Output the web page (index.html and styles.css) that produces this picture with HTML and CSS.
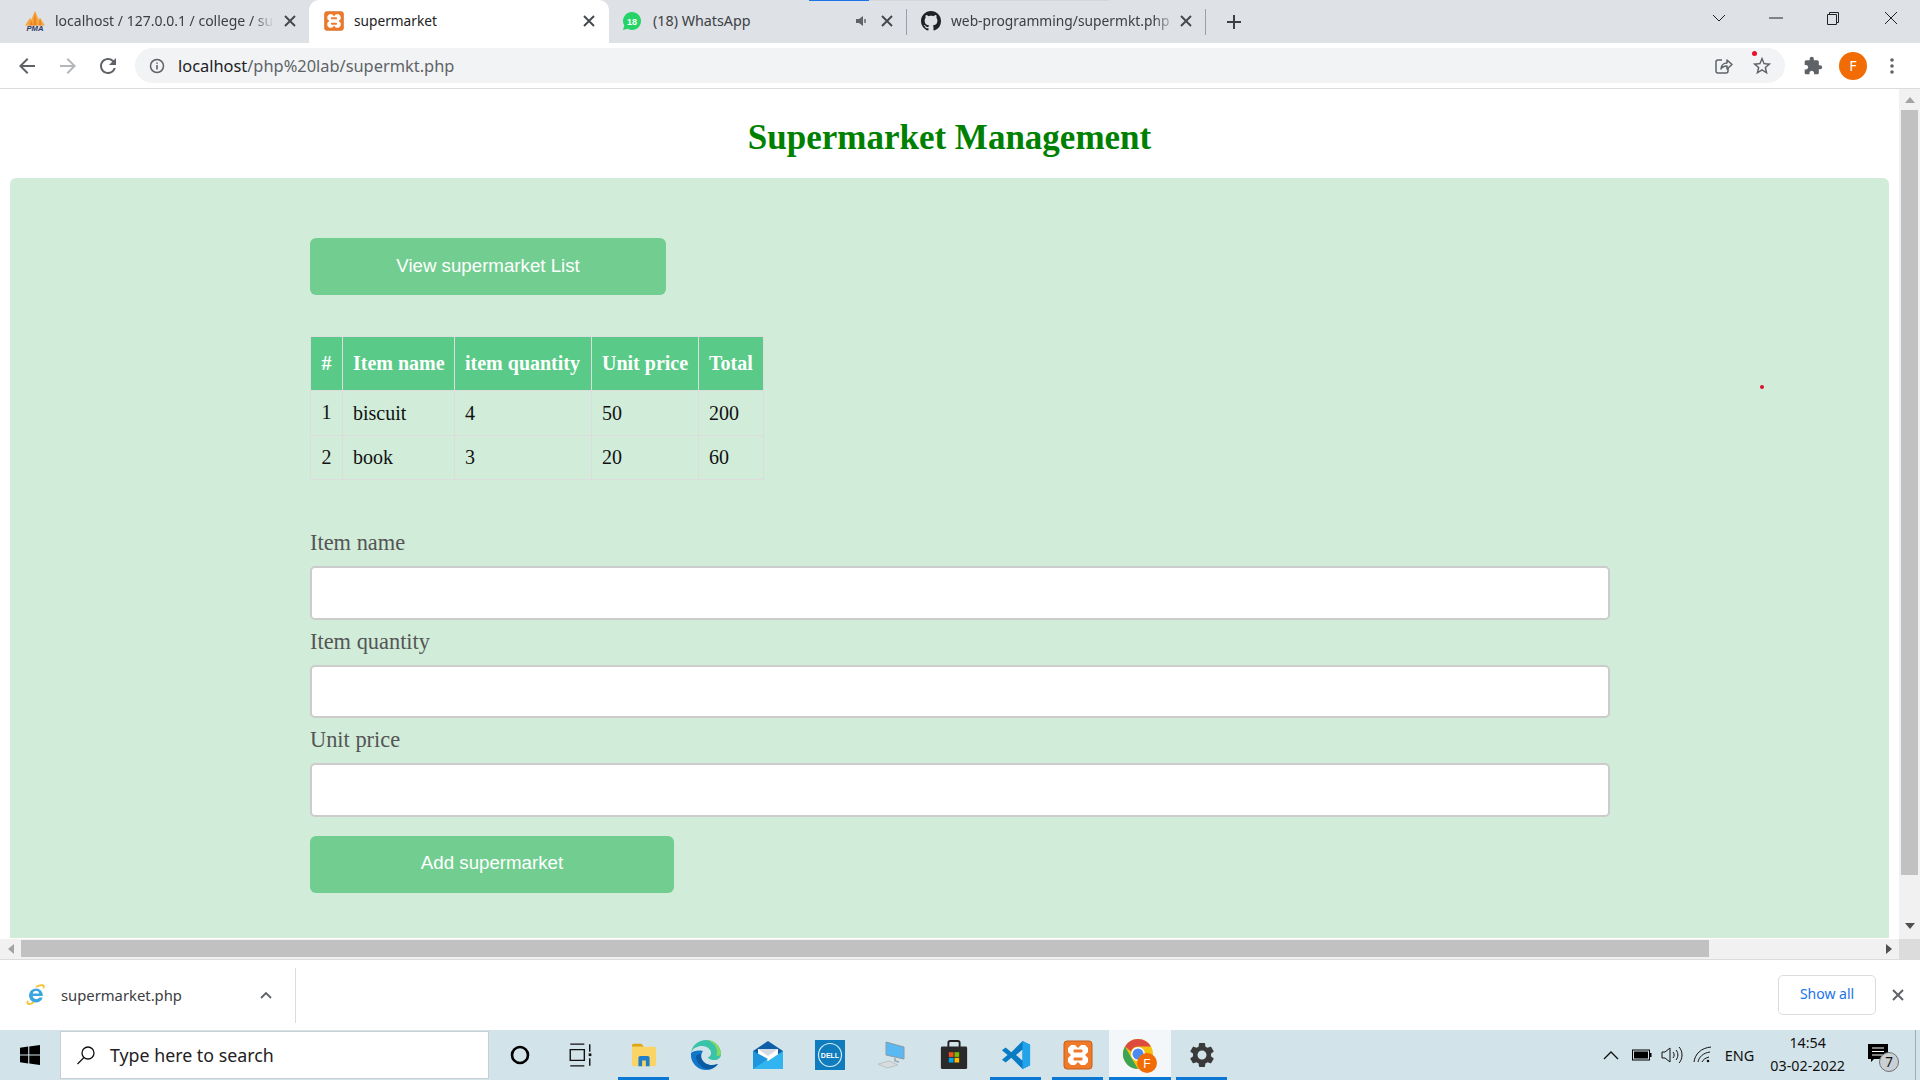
FILE: index.html
```html
<!DOCTYPE html>
<html lang="en">
<head>
<meta charset="utf-8">
<title>supermarket</title>
<link rel="stylesheet" href="styles.css">
</head>
<body>
<div class="app">
  <header class="tabstrip">
    <div class="tab tab-a">
      <svg class="fav" viewBox="0 0 20 20"><path d="M1 14 5.500 7l1 2L10 1l3.500 8 1-2 4.500 7z" fill="#f7a63e"/><path d="M6.500 9 8 14H5zM10 1l1.500 13h-3zM14.500 7 16 14h-2.500z" fill="#e8781e" opacity=".75"/><text x="10" y="19.500" text-anchor="middle" class="pma">PMA</text></svg>
      <span class="tab-title">localhost / 127.0.0.1 / college / su</span>
      <svg class="tab-x" viewBox="0 0 20 20"><path d="M5 5l10 10M15 5 5 15"/></svg>
    </div>
    <div class="tab tab-b">
      <svg class="fav" viewBox="0 0 20 20"><use href="#xampp"/></svg>
      <span class="tab-title">supermarket</span>
      <svg class="tab-x" viewBox="0 0 20 20"><path d="M5 5l10 10M15 5 5 15"/></svg>
    </div>
    <div class="tab tab-c">
      <svg class="fav" viewBox="0 0 20 20"><path d="M10 1a9 9 0 0 0-7.700 13.600L1 19l4.500-1.200A9 9 0 1 0 10 1z" fill="#25d366"/><text x="10" y="13.500" text-anchor="middle" class="wa">18</text></svg>
      <span class="tab-title">(18) WhatsApp</span>
      <svg class="tab-mute" viewBox="0 0 14 14"><path d="M1 5h3l4-3v10L4 9H1z" fill="#5f6368"/><path d="M10 5v4" stroke="#5f6368" stroke-width="1.400"/></svg>
      <svg class="tab-x" viewBox="0 0 20 20"><path d="M5 5l10 10M15 5 5 15"/></svg>
    </div>
    <div class="tab tab-d">
      <svg class="fav" viewBox="0 0 16 16"><path fill="#202124" d="M8 0C3.58 0 0 3.58 0 8c0 3.54 2.29 6.53 5.47 7.59.4.07.55-.17.55-.38 0-.19-.01-.82-.01-1.49-2.01.37-2.53-.49-2.69-.94-.09-.23-.48-.94-.82-1.13-.28-.15-.68-.52-.01-.53.63-.01 1.08.58 1.23.82.72 1.21 1.87.87 2.33.66.07-.52.28-.87.51-1.07-1.78-.2-3.64-.89-3.64-3.95 0-.87.31-1.59.82-2.15-.08-.2-.36-1.02.08-2.12 0 0 .67-.21 2.2.82.64-.18 1.32-.27 2-.27.68 0 1.36.09 2 .27 1.53-1.04 2.2-.82 2.2-.82.44 1.1.16 1.92.08 2.12.51.56.82 1.27.82 2.15 0 3.07-1.87 3.75-3.65 3.95.29.25.54.73.54 1.48 0 1.07-.01 1.93-.01 2.2 0 .21.15.46.55.38A8.013 8.013 0 0 0 16 8c0-4.42-3.58-8-8-8z"/></svg>
      <span class="tab-title">web-programming/supermkt.php</span>
      <svg class="tab-x" viewBox="0 0 20 20"><path d="M5 5l10 10M15 5 5 15"/></svg>
    </div>
    <svg class="tab-plus" viewBox="0 0 16 16"><path d="M8 1v14M1 8h14"/></svg>
    <div class="win-ctrls">
      <svg class="win-btn chev" viewBox="0 0 14 14"><path d="M1 4l6 6 6-6"/></svg>
      <svg class="win-btn min" viewBox="0 0 14 14"><path d="M0 7h14"/></svg>
      <svg class="win-btn max" viewBox="0 0 14 14"><path d="M1.500 3.500h9v10h-9zM3.500 3.500v-2h9v10h-2"/></svg>
      <svg class="win-btn cls" viewBox="0 0 14 14"><path d="M1 1l12 12M13 1 1 13"/></svg>
    </div>
    <div class="load-line"><span class="load-blue"></span></div>
  </header>

  <nav class="toolbar">
    <svg class="nav-ic" viewBox="0 0 24 24"><path fill="#5f6368" d="M20 11H7.830l5.590-5.590L12 4l-8 8 8 8 1.410-1.410L7.830 13H20v-2z"/></svg>
    <svg class="nav-ic" viewBox="0 0 24 24"><path fill="#b4b7ba" d="M4 11h12.170l-5.590-5.590L12 4l8 8-8 8-1.410-1.410L16.170 13H4v-2z"/></svg>
    <svg class="nav-ic nav-reload" viewBox="0 0 24 24"><path fill="#5f6368" d="M17.650 6.350A7.958 7.958 0 0 0 12 4c-4.420 0-7.990 3.580-7.990 8s3.570 8 7.990 8c3.730 0 6.840-2.550 7.730-6h-2.080A5.990 5.990 0 0 1 12 18c-3.310 0-6-2.690-6-6s2.690-6 6-6c1.660 0 3.140.69 4.220 1.780L13 11h7V4l-2.350 2.350z"/></svg>
    <div class="omnibox">
      <svg class="info" viewBox="0 0 16 16"><circle cx="8" cy="8" r="6.500" fill="none" stroke="#5f6368" stroke-width="1.500"/><path d="M8 7v4.500M8 4.500v1.300" stroke="#5f6368" stroke-width="1.600"/></svg>
      <span class="url"><span class="url-host">localhost</span>/php%20lab/supermkt.php</span>
      <svg class="omni-share" viewBox="0 0 20 20"><path d="M9 4H5a2 2 0 0 0-2 2v9a2 2 0 0 0 2 2h8a2 2 0 0 0 2-2v-3" fill="none" stroke="#5f6368" stroke-width="1.500"/><path d="M8 13c0-4 3-6 6-6V4l5 4.500-5 4.500v-3c-3 0-5 1-6 3z" fill="none" stroke="#5f6368" stroke-width="1.500" stroke-linejoin="round"/></svg>
      <svg class="omni-star" viewBox="0 0 24 24"><path fill="#5f6368" d="M22 9.240l-7.190-.62L12 2 9.190 8.630 2 9.240l5.460 4.730L5.820 21 12 17.270 18.180 21l-1.630-7.030L22 9.240zM12 15.400l-3.760 2.270 1-4.280-3.320-2.880 4.380-.38L12 6.100l1.710 4.040 4.380.38-3.320 2.880 1 4.280L12 15.400z"/></svg>
      <span class="star-dot"></span>
    </div>
    <svg class="puzzle" viewBox="0 0 24 24"><path fill="#5f6368" d="M20.500 11H19V7c0-1.100-.9-2-2-2h-4V3.500C13 2.120 11.880 1 10.500 1S8 2.120 8 3.500V5H4c-1.100 0-1.990.9-1.990 2v3.800H3.500c1.490 0 2.700 1.210 2.700 2.700s-1.210 2.700-2.700 2.700H2V20c0 1.100.9 2 2 2h3.800v-1.500c0-1.490 1.210-2.700 2.700-2.700 1.490 0 2.700 1.210 2.700 2.700V22H17c1.100 0 2-.9 2-2v-4h1.500c1.380 0 2.500-1.120 2.500-2.500S21.880 11 20.500 11z"/></svg>
    <span class="avatar">F</span>
    <svg class="kebab" viewBox="0 0 4 18"><circle cx="2" cy="3" r="1.800"/><circle cx="2" cy="9" r="1.800"/><circle cx="2" cy="15" r="1.800"/></svg>
  </nav>

  <div class="viewport">
    <main class="page">
      <h1 class="page-title">Supermarket Management</h1>
      <section class="panel">
        <button class="btn btn-view" type="button">View supermarket List</button>
        <table class="items">
          <thead>
            <tr><th class="c1">#</th><th class="c2">Item name</th><th class="c3">item quantity</th><th class="c4">Unit price</th><th class="c5">Total</th></tr>
          </thead>
          <tbody>
            <tr><td class="num">1</td><td>biscuit</td><td>4</td><td>50</td><td>200</td></tr>
            <tr><td class="num">2</td><td>book</td><td>3</td><td>20</td><td>60</td></tr>
          </tbody>
        </table>
        <form class="entry">
          <label class="field-label">Item name</label>
          <input class="field" type="text">
          <label class="field-label">Item quantity</label>
          <input class="field" type="text">
          <label class="field-label">Unit price</label>
          <input class="field field-last" type="text">
          <button class="btn btn-add" type="button">Add supermarket</button>
        </form>
      </section>
      <span class="cursor-dot"></span>
    </main>
    <aside class="vbar">
      <div class="sb-btn"><span class="arrow-up"></span></div>
      <div class="vthumb"></div>
      <div class="sb-btn sb-btn-end"><span class="arrow-down"></span></div>
    </aside>
  </div>

  <div class="hbar">
    <div class="hbtn"><span class="arrow-left"></span></div>
    <div class="hthumb"></div>
    <div class="hbtn hbtn-end"><span class="arrow-right"></span></div>
    <div class="corner"></div>
  </div>

  <div class="downloads">
    <svg class="ie" viewBox="0 0 24 24"><path d="M4 18C2 22 6 22 10 19M19 5c3-3-2-4-7-1" fill="none" stroke="#f2c233" stroke-width="1.800"/><path d="M12 5.500a7 7 0 1 0 6.700 9h-3.400a3.700 3.700 0 0 1-6.700-1.500h10.300A7 7 0 0 0 12 5.500zM8.600 10.500a3.500 3.500 0 0 1 6.800 0z" fill="#3aa6e0"/></svg>
    <span class="dl-name">supermarket.php</span>
    <svg class="dl-chev" viewBox="0 0 12 8"><path d="M1 7l5-5 5 5"/></svg>
    <span class="dl-sep"></span>
    <button class="show-all" type="button">Show all</button>
    <svg class="dl-x" viewBox="0 0 12 12"><path d="M1 1l10 10M11 1 1 11"/></svg>
  </div>

  <footer class="taskbar">
    <div class="start"><svg class="winlogo" viewBox="0 0 20 20"><path d="M0 2.800 8.200 1.600v7.900H0zM9.300 1.500 20 0v9.500H9.300zM0 10.500h8.200v7.900L0 17.200zM9.300 10.500H20V20L9.300 18.500z" fill="#000"/></svg></div>
    <div class="search">
      <svg class="search-ic" viewBox="0 0 20 20"><circle cx="12" cy="8" r="6" fill="none" stroke="#111" stroke-width="1.300"/><path d="M8 12.500 1.500 19" stroke="#111" stroke-width="1.300"/></svg>
      <span class="search-text">Type here to search</span>
    </div>
    <div class="slot slot-cortana"><svg class="ti-cortana" viewBox="0 0 20 20"><circle cx="10" cy="10" r="8" fill="none" stroke="#000" stroke-width="2.600"/></svg></div>
    <div class="slot slot-tview"><svg class="ti" viewBox="0 0 24 24"><path d="M3 2h13M3 22h13M3 7h13v10H3zM21 2v7M21 15v7" fill="none" stroke="#111" stroke-width="1.300"/><rect x="20" y="10.500" width="2.500" height="2.500" fill="#111"/></svg></div>
    <div class="slot on"><svg class="ti" viewBox="0 0 28 28"><path d="M1 4a2 2 0 0 1 2-2h8l3 3H1z" fill="#e2a50e"/><rect x="1" y="5" width="26" height="21" rx="2" fill="#fbd466"/><path d="M8 26V17a2 2 0 0 1 2-2h8a2 2 0 0 1 2 2v9h-4v-6h-4v6z" fill="#1f7fc9"/></svg></div>
    <div class="slot"><svg class="ti ti-lg" viewBox="0 0 30 30"><path d="M0 13C1 5 8 0 15 0c8 0 15 6 15 14 0 4-3 6-7 6-4 0-6-2-6-3 2 0 3-2 3-4 0-3-3-7-9-7C6 6 2 8 0 13z" fill="#39c3a8"/><path d="M30 14c0-8-7-14-15-14 6 1 11 6 11 12 0 2-1 3 0 4 2 0 4-1 4-2z" fill="#86d960"/><path d="M0 13c-1 9 6 17 15 17 5 0 9-2 12-6-3 1-9 2-13-1-4-3-5-8-2-12-5-1-10 0-12 2z" fill="#1177c9"/><path d="M5 17c1 6 6 12 12 12 4 0 7-2 10-5-4 1-9 2-13-1-3-2-5-6-4-9-2 0-5 1-5 3z" fill="#0c59a4"/></svg></div>
    <div class="slot"><svg class="ti ti-lg" viewBox="0 0 30 30"><path d="M0 11 15 1l15 10v18H0z" fill="#0e5fa8"/><path d="M5 9h20v9l-10 6-10-6z" fill="#fff"/><path d="M5 9h20l-10 7z" fill="#d4dbe2"/><path d="M0 11l15 10 15-10v18H0z" fill="#31b4ef"/><path d="M0 29l15-10-15-8z" fill="#1d96dd"/></svg></div>
    <div class="slot"><svg class="ti ti-lg" viewBox="0 0 30 30"><rect width="30" height="30" fill="#0f7cbd"/><circle cx="15" cy="15" r="11.500" fill="none" stroke="#d4ebf5" stroke-width="1.200"/><text x="15" y="17.500" text-anchor="middle" class="dell">DELL</text></svg></div>
    <div class="slot"><svg class="ti ti-lg" viewBox="0 0 30 30"><path d="M9 2 27 7v12L9 15z" fill="#5ab8f2" stroke="#8e9ba1"/><path d="M18 18v3l4 1" stroke="#9aa7ad" fill="none" stroke-width="1.500"/><path d="M1 24l11-3 9 4-11 3z" fill="#d8dcde" stroke="#aab2b6" stroke-width=".6"/></svg></div>
    <div class="slot"><svg class="ti ti-lg" viewBox="0 0 32 32"><path d="M10 8V3a2 2 0 0 1 2-2h8a2 2 0 0 1 2 2v5" fill="none" stroke="#222" stroke-width="2"/><rect x="2" y="7" width="28" height="24" rx="1.500" fill="#2a2a2a"/><rect x="10.500" y="13" width="5" height="5" fill="#f25022"/><rect x="16.500" y="13" width="5" height="5" fill="#7fba00"/><rect x="10.500" y="19" width="5" height="5" fill="#00a4ef"/><rect x="16.500" y="19" width="5" height="5" fill="#ffb900"/></svg></div>
    <div class="slot on"><svg class="ti ti-lg" viewBox="0 0 32 32"><path d="M23 1 11 13 5 8 1 11l6 5-6 5 4 3 6-5 12 12 8-4V5zM23 10v12l-7-6z" fill="#0a7cc4" fill-rule="evenodd"/><path d="M23 1l8 4v22l-8 4z" fill="#22a4ea"/></svg></div>
    <div class="slot on"><svg class="ti ti-lg" viewBox="0 0 30 30"><use href="#xampp"/></svg></div>
    <div class="slot on active"><svg class="ti ti-chrome" viewBox="0 0 36 36"><circle cx="16" cy="16" r="15" fill="#f4c20d"/><path d="M3 8.500a15 15 0 0 1 26 0H16a7.500 7.500 0 0 0-7 5z" fill="#dd4b3e"/><path d="M3 8.500 9.500 20l6.500 11A15 15 0 0 1 3 8.500z" fill="#3ba458"/><circle cx="16" cy="16" r="7" fill="#fff"/><circle cx="16" cy="16" r="5.500" fill="#4d8bf0"/><circle cx="25" cy="25" r="10" fill="#f26c05"/><text x="25" y="29.500" text-anchor="middle" class="chr-f">F</text></svg></div>
    <div class="slot on"><svg class="ti ti-lg" viewBox="0 0 24 24"><path fill="#3a3a3a" d="M19.140 12.940c.04-.3.06-.61.06-.94 0-.32-.02-.64-.07-.94l2.030-1.580a.49.49 0 0 0 .12-.61l-1.920-3.320a.488.488 0 0 0-.59-.22l-2.390.96c-.5-.38-1.030-.7-1.620-.94l-.36-2.540a.484.484 0 0 0-.48-.41h-3.840c-.24 0-.43.17-.47.41l-.36 2.540c-.59.24-1.130.57-1.620.94l-2.390-.96c-.22-.08-.47 0-.59.22L2.740 8.870c-.12.21-.08.47.12.61l2.030 1.580c-.05.3-.09.63-.09.94s.02.64.07.94l-2.030 1.580a.49.49 0 0 0-.12.61l1.920 3.320c.12.22.37.29.59.22l2.390-.96c.5.38 1.030.7 1.620.94l.36 2.54c.05.24.24.41.48.41h3.840c.24 0 .44-.17.47-.41l.36-2.540c.59-.24 1.130-.56 1.620-.94l2.390.96c.22.08.47 0 .59-.22l1.920-3.320c.12-.22.07-.47-.12-.61l-2.010-1.580zM12 15.600c-1.980 0-3.600-1.620-3.600-3.600s1.620-3.600 3.600-3.600 3.600 1.620 3.600 3.600-1.620 3.600-3.600 3.600z"/></svg></div>

    <div class="tray">
      <svg class="tr tr-chev" viewBox="0 0 16 10"><path d="M1 9l7-7 7 7"/></svg>
      <svg class="tr tr-batt" viewBox="0 0 20 12"><rect x=".5" y="1" width="17" height="10" fill="none" stroke="#000"/><rect x="2" y="2.500" width="14" height="7"/><rect x="18" y="4" width="1.500" height="4"/></svg>
      <svg class="tr tr-vol" viewBox="0 0 22 18"><path d="M1 6h3l5-4v14l-5-4H1zM12 6c1.500 2 1.500 4 0 6M15 4c2.500 3 2.500 7 0 10M18 1c4 4 4 12 0 16" fill="none" stroke="#111"/></svg>
      <svg class="tr tr-wifi" viewBox="0 0 20 18"><path d="M1 16C2 8 8 2 18 1M5 16c1-5 5-9 12-10M9 16c1-2 3-4 7-5" fill="none" stroke="#111"/><circle cx="15" cy="15" r="1.300" fill="#111"/></svg>
      <span class="lang">ENG</span>
      <div class="clock"><span>14:54</span><span>03-02-2022</span></div>
      <div class="notif">
        <svg class="notif-ic" viewBox="0 0 20 18"><path d="M0 0h20v15H6l-3 3v-3H0z" fill="#000"/><path d="M4 4h12M4 7.500h12M4 11h12" stroke="#fff"/></svg>
        <span class="notif-badge">7</span>
      </div>
    </div>
  </footer>
</div>

<svg class="defs" width="0" height="0" aria-hidden="true">
  <symbol id="xampp" viewBox="0 0 30 30">
    <rect x="1" y="1" width="28" height="28" rx="3" fill="#ef7a2a" stroke="#c85c18"/>
    <path d="M8 5h4l3 3 3-3h4l3 3v4l-3 3 3 3v4l-3 3h-4l-3-3-3 3H8l-3-3v-4l3-3-3-3V8z" fill="#fff"/>
    <rect x="10.500" y="9.500" width="9" height="3" rx="1" fill="#ef7a2a"/>
    <rect x="10.500" y="17.500" width="9" height="3" rx="1" fill="#ef7a2a"/>
  </symbol>
</svg>
</body>
</html>
```

FILE: styles.css
```css
* { box-sizing: border-box; }
html, body { margin: 0; height: 100%; overflow: hidden; background: #fff; }
body { font-family: "Noto Sans", sans-serif; color: #202124; }
.defs { position: absolute; }
.app { height: 1080px; display: grid; grid-template-rows: 43px 46px 850px 21px 70px 50px; }

/* tab strip */
.tabstrip { position: relative; display: flex; background: #dee1e6; height: 43px; }
.tab { display: flex; align-items: center; height: 41px; font-size: 14px; color: #3c4043; }
.fav { width: 20px; height: 20px; flex: none; }
.tab-a .fav { width: 22px; height: 22px; margin-left: -1px; margin-right: -1px; }
.tab-title { flex: 1; min-width: 0; margin-left: 10px; white-space: nowrap; overflow: hidden; -webkit-mask-image: linear-gradient(to left, transparent, #000 22px); mask-image: linear-gradient(to left, transparent, #000 22px); }
.tab-x { width: 20px; height: 20px; flex: none; margin-left: 6px; stroke: #44474b; stroke-width: 1.900; fill: none; }
.tab-a { width: 309px; padding: 0 9px 0 25px; }
.tab-b { width: 300px; height: 43px; padding: 0 10px 2px 15px; background: #fff; border-radius: 10px 10px 0 0; color: #202124; font-size: 13.700px; }
.tab-b .tab-title { -webkit-mask-image: none; mask-image: none; }
.tab-c { width: 298px; padding: 0 10px 0 13px; position: relative; font-size: 14.300px; }
.tab-c .tab-title { -webkit-mask-image: none; mask-image: none; margin-left: 11px; }
.tab-d { width: 299px; padding: 0 10px 0 14px; position: relative; }
.tab-d .tab-title { font-size: 13.800px; }
.tab-d .tab-x { margin-left: 0; }
.tab-c::after, .tab-d::after { content: ""; position: absolute; right: 0; top: 9px; height: 26px; width: 1px; background: #9aa0a6; }
.tab-mute { width: 14px; height: 14px; flex: none; }
.tab-c .tab-x { margin-left: 8px; }
.tab-plus { width: 16px; height: 16px; margin: 14px 0 0 20px; stroke: #3c4043; stroke-width: 2; fill: none; flex: none; }
.win-ctrls { margin-left: auto; display: flex; align-items: center; height: 36px; padding-right: 22px; }
.win-btn { width: 14px; height: 14px; fill: none; stroke: #222; stroke-width: 1; flex: none; }
.chev { margin-right: 43px; }
.min { margin-right: 43px; }
.max { margin-right: 44px; }
.load-line { position: absolute; left: 809px; top: 0; width: 300px; height: 1px; background: #d4d6da; }
.load-blue { display: block; width: 60px; height: 1px; background: #1a73e8; }

/* toolbar */
.toolbar { display: flex; align-items: center; background: #fff; border-bottom: 1px solid #dadce0; height: 46px; padding-left: 15px; }
.nav-ic { width: 24px; height: 24px; margin-right: 17px; flex: none; }
.nav-reload { margin-left: -1px; margin-right: 15px; }
.omnibox { position: relative; display: flex; align-items: center; width: 1650px; height: 35px; margin-left: 0; background: #f1f3f4; border-radius: 18px; padding-left: 14px; }
.info { width: 16px; height: 16px; flex: none; }
.url { margin-left: 13px; font-size: 16.400px; color: #5f6368; white-space: nowrap; }
.url-host { color: #202124; }
.omni-share { width: 20px; height: 20px; margin-left: auto; flex: none; }
.omni-star { width: 22px; height: 22px; margin: 0 12px 0 18px; flex: none; }
.star-dot { position: absolute; right: 28px; top: 3px; width: 5px; height: 5px; border-radius: 50%; background: #e8112d; }
.puzzle { width: 20px; height: 20px; margin-left: 18px; flex: none; }
.avatar { width: 28px; height: 28px; margin-left: 16px; border-radius: 50%; background: #f26c05; color: #fff; font-size: 14px; display: flex; align-items: center; justify-content: center; flex: none; }
.kebab { width: 4px; height: 18px; margin-left: 23px; fill: #5f6368; flex: none; }

/* page */
.viewport { display: flex; height: 850px; overflow: hidden; }
.page { position: relative; width: 1899px; flex: none; display: flex; flex-direction: column; font-family: "Liberation Serif", serif; }
.page-title { margin: 29px 0 20px; font-size: 35px; line-height: 40px; font-weight: 700; text-align: center; color: #008000; }
.panel { margin: 0 10px; height: 760px; padding: 60px 0 0 300px; background: #d1edda; border-radius: 6px 6px 0 0; }
.btn { display: block; height: 57px; border: 0; border-radius: 6px; background: #72ce90; color: #fff; font: 18.700px "Liberation Sans", sans-serif; padding: 0 0 1px; }
.btn-view { width: 356px; }
.btn-add { width: 364px; padding-bottom: 2px; }
.items { margin-top: 41px; width: 453px; table-layout: fixed; border-collapse: collapse; font-size: 20px; color: #111; }
.items th, .items td { text-align: left; padding: 0 10px; }
.items th { height: 54px; background: #59ca87; color: #fff; border: 1px solid #ddd; font-weight: 700; white-space: nowrap; }
.items td { height: 44.500px; border: 1px solid #dcdcdc; padding-bottom: 0; padding-top: 1px; }
.items .c1, .items .num { text-align: center; padding: 0; }
.c1 { width: 32px; }
.c2 { width: 112px; }
.c3 { width: 137px; }
.c4 { width: 107px; }
.c5 { width: 65px; }
.entry { margin-top: 50px; width: 1300px; }
.field-label { display: block; height: 26px; line-height: 26px; margin-bottom: 10px; font-size: 22.400px; color: #555; }
.field { display: block; width: 100%; height: 53.500px; margin-bottom: 9px; border: 2px solid #ccc; border-radius: 5px; background: #fff; }
.field-last { margin-bottom: 19px; }
.cursor-dot { position: absolute; left: 1760px; top: 296px; width: 4px; height: 4px; border-radius: 50%; background: #d8112a; }

/* scrollbars */
.vbar { width: 21px; flex: none; display: flex; flex-direction: column; background: #f1f1f1; }
.sb-btn { height: 21px; display: flex; align-items: center; justify-content: center; flex: none; }
.sb-btn-end { margin-top: auto; padding-bottom: 5px; }
.vthumb { height: 765px; margin: 0 2px; background: #c1c1c1; flex: none; }
.arrow-up { border: 5px solid transparent; border-top: 0; border-bottom: 6px solid #a3a3a3; }
.arrow-down { border: 5px solid transparent; border-bottom: 0; border-top: 6px solid #505050; }
.arrow-left { border: 5px solid transparent; border-left: 0; border-right: 6px solid #a3a3a3; }
.arrow-right { border: 5px solid transparent; border-right: 0; border-left: 6px solid #505050; }
.hbar { display: flex; height: 21px; padding-bottom: 2px; background: #f1f1f1; border-bottom: 1px solid #dadce0; border-top: 1px solid #f1f1f1; }
.hbtn { width: 21px; display: flex; align-items: center; justify-content: center; flex: none; }
.hbtn-end { margin-left: auto; }
.hthumb { width: 1688px; background: #c1c1c1; flex: none; }
.corner { width: 21px; background: #dcdcdc; flex: none; margin: -1px 0 -2px; }

/* downloads */
.downloads { display: flex; align-items: center; height: 70px; background: #fff; padding-left: 24px; }
.ie { width: 24px; height: 24px; flex: none; }
.dl-name { margin-left: 13px; font-size: 14.800px; color: #3c4043; }
.dl-chev { width: 12px; height: 8px; margin-left: 78px; stroke: #5f6368; stroke-width: 1.800; fill: none; flex: none; }
.dl-sep { width: 1px; height: 55px; margin-left: 23px; background: #dadce0; flex: none; }
.show-all { width: 98px; height: 40px; margin-left: auto; padding: 0 0 3px; border: 1px solid #dadce0; border-radius: 5px; background: #fff; color: #1a73e8; font: 14px "Noto Sans", sans-serif; }
.dl-x { width: 12px; height: 12px; margin: 0 16px 0 16px; stroke: #5f6368; stroke-width: 2; fill: none; flex: none; }

/* taskbar */
.taskbar { display: flex; align-items: center; height: 50px; background: #d3e3ea; }
.start { width: 60px; display: flex; justify-content: center; flex: none; }
.winlogo { width: 20px; height: 20px; }
.search { width: 429px; height: 48px; display: flex; align-items: center; background: #fff; border: 1px solid #c9ced1; padding-left: 15px; flex: none; }
.search-ic { width: 20px; height: 20px; flex: none; }
.search-text { margin-left: 14px; font-size: 17.800px; color: #222; white-space: nowrap; }
.slot { position: relative; width: 62px; height: 50px; display: flex; align-items: center; justify-content: center; flex: none; }
.slot-cortana { width: 62px; }
.slot-tview { width: 58px; margin-right: 4px; }
.slot.on::after { content: ""; position: absolute; left: 5px; right: 6px; bottom: 0; height: 3px; background: #0a78d4; }
.slot.active { background: #f3f7f9; }
.slot.active::after { left: 0; right: 0; }
.ti { width: 26px; height: 26px; }
.ti-lg { width: 30px; height: 30px; }
.ti-cortana { width: 20px; height: 20px; }
.ti-chrome { width: 36px; height: 36px; margin-top: 2px; }
.pma { font: italic 700 7px "Liberation Sans", sans-serif; fill: #2d3a66; }
.wa { font: 700 9px "Liberation Sans", sans-serif; fill: #fff; }
.dell { font: 700 7px "Liberation Sans", sans-serif; fill: #fff; }
.chr-f { font: 12px "Liberation Sans", sans-serif; fill: #fff; }
.tray { margin-left: auto; display: flex; align-items: center; height: 50px; color: #111; border-right: 1px solid #9fb0b8; margin-right: 4px; }
.tr { flex: none; }
.tr-chev { width: 16px; height: 10px; fill: none; stroke: #111; stroke-width: 1.300; }
.tr-batt { width: 20px; height: 12px; margin-left: 13px; }
.tr-vol { width: 22px; height: 18px; margin-left: 9px; }
.tr-wifi { width: 20px; height: 18px; margin-left: 10px; }
.lang { margin-left: 12px; font-size: 14.500px; }
.clock { display: flex; flex-direction: column; align-items: center; gap: 5px; margin-left: 16px; margin-top: -2px; font-size: 14.300px; line-height: 18px; }
.notif { position: relative; width: 36px; height: 50px; margin-left: 15px; margin-right: 19px; }
.notif-ic { position: absolute; left: 8px; top: 14px; width: 20px; height: 18px; }
.notif-badge { position: absolute; left: 19px; top: 22px; width: 20px; height: 20px; border-radius: 50%; background: #c9cfd2; border: 1px solid #6f7478; font-size: 13.500px; line-height: 18px; text-align: center; color: #111; }
```
